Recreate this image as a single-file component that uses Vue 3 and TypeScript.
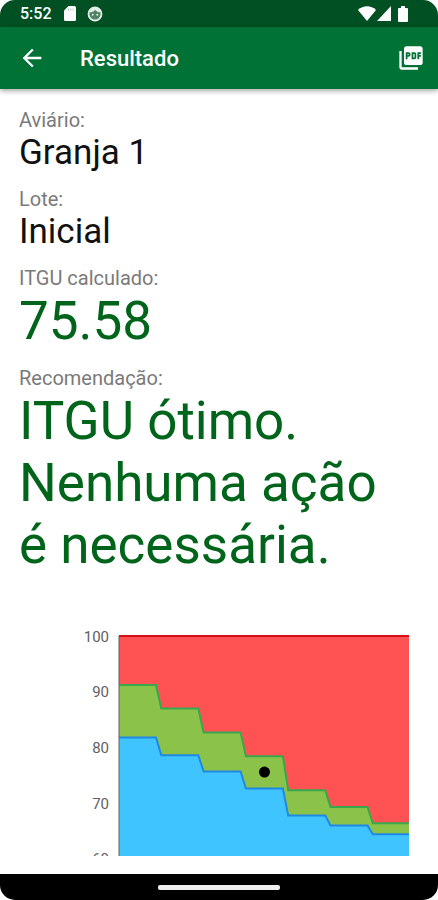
<script setup lang="ts">
interface Field {
  label: string
  value: string
  kind: 'plain' | 'result'
}

const fields: Field[] = [
  { label: 'Aviário:', value: 'Granja 1', kind: 'plain' },
  { label: 'Lote:', value: 'Inicial', kind: 'plain' },
  { label: 'ITGU calculado:', value: '75.58', kind: 'result' },
  { label: 'Recomendação:', value: 'ITGU ótimo. Nenhuma ação é necessária.', kind: 'result' },
]

// Plot geometry, in viewBox units
const left = 100
const right = 390
const top = 16
const bottom = 236
const unit = 5.57
const step = 42.3
const flat = 37

const ticks: number[] = [100, 90, 80, 70, 60]
const upper: number[] = [91.2, 87, 82.7, 78.4, 72.3, 69.3, 66.4]
const lower: number[] = [81.8, 78.6, 75.7, 72.6, 67.8, 66, 64.4]

const yOf = (value: number): number => top + (100 - value) * unit

// Each week is a flat stretch followed by a short slope to the next one
function stepLine(values: number[]): string {
  return values
    .map((value, i) => {
      const start = left + i * step
      const end = i === values.length - 1 ? right : start + flat
      return `${start.toFixed(1)},${yOf(value).toFixed(1)} ${end.toFixed(1)},${yOf(value).toFixed(1)}`
    })
    .join(' ')
}

const area = (values: number[]): string => `${stepLine(values)} ${right},${bottom} ${left},${bottom}`

const point = { x: 245.5, y: yOf(75.58) }
</script>

<template>
  <div class="screen">
    <div class="status">
      <span class="time">5:52</span>
      <svg class="sd" viewBox="0 0 12 15" aria-hidden="true">
        <path d="M4.5 0H10.5Q12 0 12 1.5V13.5Q12 15 10.5 15H1.5Q0 15 0 13.5V4.5Z" fill="#fff" />
        <path d="M4.5 2.5V4.5M6.8 2.5V4.5M9 2.5V4.5" stroke="#b9cfc0" stroke-width="1" />
      </svg>
      <svg class="face" viewBox="0 0 16 16" aria-hidden="true">
        <circle cx="8" cy="8" r="6.5" fill="#4d8562" stroke="#e6eee8" stroke-width="1.8" />
        <path d="M2.5 6.2C5 6.6 7.2 5.7 8.2 3.8C9.3 5.6 11 6.4 13.5 6.2L12.8 3.5L8 1.5L3.2 3.5Z" fill="#e6eee8" />
        <circle cx="5.7" cy="8.8" r="1" fill="#e6eee8" />
        <circle cx="10.3" cy="8.8" r="1" fill="#e6eee8" />
      </svg>
      <span class="spacer"></span>
      <svg class="wifi" viewBox="0 0 18 15" aria-hidden="true">
        <path d="M9 15L0 4C5 -1 13 -1 18 4Z" fill="#fff" />
      </svg>
      <svg class="signal" viewBox="0 0 14 15" aria-hidden="true">
        <path d="M14 0V15H0Z" fill="#fff" />
      </svg>
      <svg class="battery" viewBox="0 0 10 16" aria-hidden="true">
        <path d="M3 0H7V2H9Q10 2 10 3V15Q10 16 9 16H1Q0 16 0 15V3Q0 2 1 2H3Z" fill="#fff" />
      </svg>
    </div>

    <header class="bar">
      <button class="action" type="button" aria-label="Voltar">
        <svg viewBox="0 0 24 24" aria-hidden="true">
          <path d="M20 11H7.83l5.59-5.59L12 4l-8 8 8 8 1.41-1.41L7.83 13H20v-2z" fill="#fff" />
        </svg>
      </button>
      <h1>Resultado</h1>
      <button class="action" type="button" aria-label="Exportar PDF">
        <svg viewBox="0 0 24 24" aria-hidden="true">
          <path
            d="M20 2H8c-1.1 0-2 .9-2 2v12c0 1.1.9 2 2 2h12c1.1 0 2-.9 2-2V4c0-1.1-.9-2-2-2zm-8.5 7.5c0 .83-.67 1.5-1.5 1.5H9v2H7.5V7H10c.83 0 1.5.67 1.5 1.5v1zm5 2c0 .83-.67 1.5-1.5 1.5h-2.5V7H15c.83 0 1.5.67 1.5 1.5v3zm4-3H19v1h1.5V11H19v2h-1.5V7h3v1.5zM9 9.5h1v-1H9v1zM4 6H2v14c0 1.1.9 2 2 2h14v-2H4V6zm10 5.5h1v-3h-1v3z"
            fill="#fff"
          />
        </svg>
      </button>
    </header>

    <main>
      <dl>
        <div v-for="field in fields" :key="field.label">
          <dt>{{ field.label }}</dt>
          <dd :class="field.kind">{{ field.value }}</dd>
        </div>
      </dl>

      <svg class="chart" viewBox="0 0 400 236" role="img" aria-label="ITGU">
        <text v-for="tick in ticks" :key="tick" x="90" :y="yOf(tick) + 5.5" text-anchor="end">{{ tick }}</text>
        <rect :x="left" :y="top" :width="right - left" :height="bottom - top" fill="#ff5252" />
        <polygon :points="area(upper)" fill="#8bc34a" />
        <polygon :points="area(lower)" fill="#40c4ff" />
        <polyline class="line high" :points="stepLine(upper)" />
        <polyline class="line low" :points="stepLine(lower)" />
        <line class="line limit" :x1="left" :x2="right" :y1="top" :y2="top" />
        <line class="axis" :x1="left" :x2="left" :y1="top" :y2="bottom" />
        <circle :cx="point.x" :cy="point.y" r="5.5" />
      </svg>
    </main>

    <div class="nav"><span class="handle"></span></div>
  </div>
</template>

<style>
body {
  margin: 0;
  background: #fff;
}
</style>

<style scoped>
.screen {
  display: flex;
  flex-direction: column;
  min-height: 100vh;
  overflow: hidden;
  border-radius: 15px;
  background: #fff;
  font-family: Roboto, "Liberation Sans", sans-serif;
}

.status {
  display: flex;
  align-items: center;
  height: 27px;
  padding: 0 30px 0 20px;
  background: #005023;
  color: #fff;
}

.time {
  font-size: 16px;
  font-weight: 500;
  line-height: 20px;
}

.sd {
  width: 12px;
  height: 15px;
  margin-left: 12px;
}

.face {
  width: 16px;
  height: 16px;
  margin-left: 11px;
}

.spacer {
  flex: 1;
}

.wifi {
  width: 18px;
  height: 15px;
}

.signal {
  width: 14px;
  height: 15px;
  margin-left: 1px;
}

.battery {
  width: 10px;
  height: 16px;
  margin-left: 7px;
}

.bar {
  display: flex;
  align-items: center;
  height: 62px;
  padding: 0 13px 0 18px;
  background: #007236;
  box-shadow: 0 2px 5px rgba(0, 0, 0, 0.35);
}

.action {
  display: flex;
  padding: 0;
  border: 0;
  background: none;
}

.action svg {
  width: 28px;
  height: 28px;
}

h1 {
  flex: 1;
  margin: 0;
  padding: 2px 0 0 34px;
  color: #fff;
  font-size: 22px;
  font-weight: 500;
  line-height: 28px;
}

main {
  flex: 1;
  padding: 19px 19px 18px;
}

dl {
  display: flex;
  flex-direction: column;
  gap: 14px;
  margin: 0 0 44px;
  padding-right: 19px;
}

dt {
  color: #7a7a7a;
  font-size: 20px;
  line-height: 24px;
}

dd {
  margin: 0;
}

.plain {
  color: #111;
  font-size: 35px;
  line-height: 41px;
}

.result {
  color: #00651a;
  font-size: 53px;
  line-height: 62px;
}

.chart {
  display: block;
  width: 100%;
  overflow: hidden;
}

.chart text {
  fill: #616161;
  font-size: 15px;
}

.line {
  fill: none;
  stroke-width: 2;
}

.high {
  stroke: #38a84c;
}

.low {
  stroke: #1e88e5;
}

.limit {
  stroke: #d50f14;
}

.axis {
  stroke: #616161;
  stroke-width: 1;
}

.nav {
  display: flex;
  align-items: center;
  justify-content: center;
  height: 26px;
  background: #000;
}

.handle {
  width: 28%;
  height: 5px;
  border-radius: 2px;
  background: #eee;
}
</style>
